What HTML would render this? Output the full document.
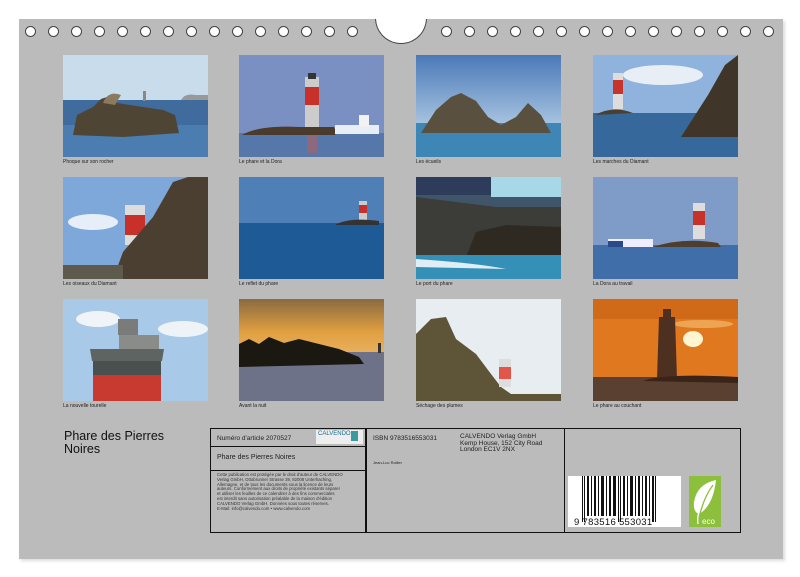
<!DOCTYPE html>
<html><head><meta charset="utf-8"><style>
*{margin:0;padding:0;box-sizing:border-box}
body{width:800px;height:577px;background:#fff;position:relative;overflow:hidden;font-family:"Liberation Sans",sans-serif}
.page{position:absolute;left:19px;top:19px;width:764px;height:540px;background:#bbbbbb;box-shadow:2px 2px 3px #ddd;overflow:hidden}
.hole{position:absolute;top:26px;width:11px;height:11px;border-radius:50%;background:#fff;border:1px solid #444}
.notch{position:absolute;left:356px;top:-1px;width:52px;height:26px;border-radius:0 0 26px 26px;background:#fff;border:1px solid #444;border-top:none}
.ph{position:absolute;width:145px;height:102px;overflow:hidden}
.ph svg{display:block}
.cap{position:absolute;font-size:5px;color:#222;white-space:nowrap}
.box{position:absolute;border:1.5px solid #111}
.t{position:absolute;color:#222;white-space:nowrap}
</style></head><body>
<div class="page">
<div class="notch"></div>
</div>
<div id="holes"></div>
<script>
var h='';var xs=[25,48,71,94,117,140,163,186,209,232,255,278,301,324,347,441,464,487,510,533,556,579,602,625,648,671,694,717,740,763];
xs.forEach(function(x){h+='<div class="hole" style="left:'+x+'px"></div>'});document.getElementById('holes').innerHTML=h;
</script>

<!-- Row 1 -->
<div class="ph" style="left:63px;top:55px"><svg width="145" height="102" viewBox="0 0 145 102" preserveAspectRatio="none">
<rect width="145" height="45" fill="#c9dcec"/><rect y="45" width="145" height="57" fill="#3f6c9c"/>
<rect y="70" width="145" height="32" fill="#4c7db0"/>
<path d="M10 80 L14 60 L30 52 L38 44 L50 40 L54 48 L80 52 L100 55 L112 60 L116 78 L60 82Z" fill="#4e4535"/>
<path d="M40 48 Q45 35 58 40 L52 50Z" fill="#8a7a60"/>
<rect x="80" y="36" width="3" height="10" fill="#888"/>
<path d="M118 45 Q122 38 132 40 L145 40 L145 45Z" fill="#999"/>
</svg></div>
<div class="cap" style="left:63px;top:159px">Phoque sur son rocher</div>

<div class="ph" style="left:239px;top:55px"><svg width="145" height="102" viewBox="0 0 145 102" preserveAspectRatio="none">
<rect width="145" height="80" fill="#7a90c2"/><rect y="78" width="145" height="24" fill="#5577aa"/>
<rect x="66" y="22" width="14" height="52" fill="#ccc"/><rect x="66" y="32" width="14" height="18" fill="#c8302a"/>
<rect x="69" y="18" width="8" height="6" fill="#333"/>
<path d="M3 80 Q20 70 60 72 L95 72 Q98 78 96 80Z" fill="#4a3b2c"/>
<rect x="96" y="70" width="44" height="9" fill="#e8eef5"/><rect x="120" y="60" width="10" height="12" fill="#f2f2f2"/>
<rect x="68" y="80" width="10" height="18" fill="#b36060" opacity=".6"/>
</svg></div>
<div class="cap" style="left:239px;top:159px">Le phare et la Dora</div>

<div class="ph" style="left:416px;top:55px"><svg width="145" height="102" viewBox="0 0 145 102" preserveAspectRatio="none">
<defs><linearGradient id="s3" x1="0" y1="0" x2="0" y2="1"><stop offset="0" stop-color="#4a79b8"/><stop offset="1" stop-color="#a8c4e0"/></linearGradient></defs>
<rect width="145" height="70" fill="url(#s3)"/><rect y="68" width="145" height="34" fill="#3e86b5"/>
<path d="M5 78 L20 55 L35 42 L45 38 L60 46 L72 62 L85 70 L100 62 L112 48 L125 60 L135 78Z" fill="#5a5040"/>
</svg></div>
<div class="cap" style="left:416px;top:159px">Les écueils</div>

<div class="ph" style="left:593px;top:55px"><svg width="145" height="102" viewBox="0 0 145 102" preserveAspectRatio="none">
<rect width="145" height="60" fill="#8fb3dc"/><ellipse cx="70" cy="20" rx="40" ry="10" fill="#e8eef5"/>
<rect y="58" width="145" height="44" fill="#36689c"/>
<rect x="20" y="18" width="10" height="36" fill="#ddd"/><rect x="20" y="25" width="10" height="14" fill="#c6342c"/>
<path d="M2 60 Q20 50 40 58Z" fill="#4a4030"/>
<path d="M88 82 L115 40 L132 10 L145 0 L145 82Z" fill="#3f3629"/>
</svg></div>
<div class="cap" style="left:593px;top:159px">Les marches du Diamant</div>

<!-- Row 2 -->
<div class="ph" style="left:63px;top:177px"><svg width="145" height="102" viewBox="0 0 145 102" preserveAspectRatio="none">
<rect width="145" height="102" fill="#7fa8da"/><ellipse cx="30" cy="45" rx="25" ry="8" fill="#e6eef7"/>
<rect x="62" y="28" width="20" height="40" fill="#ddd"/><rect x="62" y="38" width="20" height="20" fill="#c8302a"/>
<path d="M50 102 L60 75 L90 40 L110 5 L125 0 L145 0 L145 102Z" fill="#4a3f30"/>
<rect y="88" width="60" height="14" fill="#5e5a4e"/>
</svg></div>
<div class="cap" style="left:63px;top:281px">Les oiseaux du Diamant</div>

<div class="ph" style="left:239px;top:177px"><svg width="145" height="102" viewBox="0 0 145 102" preserveAspectRatio="none">
<rect width="145" height="48" fill="#4e7fb6"/><rect y="46" width="145" height="56" fill="#1e5a96"/>
<rect x="120" y="24" width="8" height="20" fill="#ccc"/><rect x="120" y="28" width="8" height="8" fill="#c8302a"/>
<path d="M96 48 Q110 40 140 44 L140 48Z" fill="#333"/>
</svg></div>
<div class="cap" style="left:239px;top:281px">Le reflet du phare</div>

<div class="ph" style="left:416px;top:177px"><svg width="145" height="102" viewBox="0 0 145 102" preserveAspectRatio="none">
<rect width="145" height="102" fill="#40546a"/><rect x="75" y="0" width="70" height="20" fill="#a7d8e8"/>
<rect width="75" height="18" fill="#2e3c5c"/>
<path d="M0 20 L80 30 L145 30 L145 80 L0 80Z" fill="#3c3c38"/>
<path d="M50 80 L60 55 L90 48 L145 50 L145 82Z" fill="#2e2a22"/>
<rect y="78" width="145" height="24" fill="#3590b8"/><path d="M0 82 Q60 86 90 92 L0 90Z" fill="#dfeef5"/>
</svg></div>
<div class="cap" style="left:416px;top:281px">Le port du phare</div>

<div class="ph" style="left:593px;top:177px"><svg width="145" height="102" viewBox="0 0 145 102" preserveAspectRatio="none">
<rect width="145" height="70" fill="#7f9cc8"/><rect y="68" width="145" height="34" fill="#3f6ea8"/>
<rect x="100" y="26" width="12" height="36" fill="#ddd"/><rect x="100" y="34" width="12" height="14" fill="#c8302a"/>
<path d="M60 70 Q90 60 125 66 L128 70Z" fill="#4e3e30"/>
<rect x="15" y="62" width="45" height="8" fill="#eef"/><rect x="15" y="64" width="15" height="6" fill="#2a4a88"/>
</svg></div>
<div class="cap" style="left:593px;top:281px">La Dora au travail</div>

<!-- Row 3 -->
<div class="ph" style="left:63px;top:299px"><svg width="145" height="102" viewBox="0 0 145 102" preserveAspectRatio="none">
<rect width="145" height="102" fill="#a9c9e8"/><ellipse cx="35" cy="20" rx="22" ry="8" fill="#f0f4f8"/><ellipse cx="120" cy="30" rx="25" ry="8" fill="#eef3f8"/>
<rect x="55" y="20" width="20" height="16" fill="#7a7c7c"/><rect x="56" y="36" width="40" height="14" fill="#8a8c8a"/>
<path d="M27 50 L101 50 L99 62 L29 62Z" fill="#5e6462"/>
<rect x="30" y="62" width="68" height="14" fill="#4a504e"/><rect x="30" y="76" width="68" height="26" fill="#c83a30"/>
</svg></div>
<div class="cap" style="left:63px;top:403px">La nouvelle tourelle</div>

<div class="ph" style="left:239px;top:299px"><svg width="145" height="102" viewBox="0 0 145 102" preserveAspectRatio="none">
<defs><linearGradient id="s8" x1="0" y1="0" x2="0" y2="1"><stop offset="0" stop-color="#8a6a40"/><stop offset=".6" stop-color="#e0a040"/><stop offset="1" stop-color="#e8b060"/></linearGradient></defs>
<rect width="145" height="55" fill="url(#s8)"/><rect y="53" width="145" height="49" fill="#6e7288"/>
<path d="M0 45 L10 40 L20 45 L30 38 L45 44 L60 40 L80 45 L100 50 L120 58 L125 65 L0 68Z" fill="#1a1810"/>
<rect x="139" y="44" width="3" height="10" fill="#333"/>
</svg></div>
<div class="cap" style="left:239px;top:403px">Avant la nuit</div>

<div class="ph" style="left:416px;top:299px"><svg width="145" height="102" viewBox="0 0 145 102" preserveAspectRatio="none">
<rect width="145" height="102" fill="#e8edf2"/>
<path d="M0 102 L0 35 L15 20 L30 18 L40 40 L60 55 L75 75 L85 88 L95 95 L145 95 L145 102Z" fill="#5e5538"/>
<rect x="83" y="60" width="12" height="28" fill="#ddd"/><rect x="83" y="68" width="12" height="12" fill="#e2564a"/>
</svg></div>
<div class="cap" style="left:416px;top:403px">Séchage des plumes</div>

<div class="ph" style="left:593px;top:299px"><svg width="145" height="102" viewBox="0 0 145 102" preserveAspectRatio="none">
<rect width="145" height="80" fill="#e07820"/><rect y="0" width="145" height="20" fill="#d06a18"/>
<ellipse cx="100" cy="40" rx="10" ry="8" fill="#fff5d0"/><ellipse cx="110" cy="25" rx="30" ry="4" fill="#f0b060" opacity=".8"/>
<rect y="78" width="145" height="24" fill="#5a4030"/>
<path d="M66 18 L82 18 L84 80 L64 80Z" fill="#4e3020"/><rect x="70" y="10" width="8" height="8" fill="#4e3020"/>
<path d="M50 82 Q70 74 145 78 L145 84Z" fill="#3a2418"/>
</svg></div>
<div class="cap" style="left:593px;top:403px">Le phare au couchant</div>

<!-- Title -->
<div class="t" style="left:64px;top:430px;font-size:12.5px;line-height:13px;color:#111">Phare des Pierres<br>Noires</div>

<!-- Info box -->
<div class="box" style="left:210px;top:428px;width:531px;height:105px"></div>
<div class="box" style="left:210px;top:428px;width:157px;height:105px"></div>
<div class="box" style="left:365px;top:428px;width:200px;height:105px"></div>
<div class="box" style="left:210px;top:446px;width:157px;height:25px"></div>
<div class="t" style="left:217px;top:435px;font-size:6.5px">Numéro d'article 2070527</div>
<div style="position:absolute;left:316px;top:430px;width:47px;height:14px;background:#eee"></div>
<div class="t" style="left:318px;top:431px;font-size:6px;color:#1a6a8a">CALVENDO</div>
<div style="position:absolute;left:351px;top:431px;width:7px;height:10px;background:#3a9aa0"></div>
<div class="t" style="left:217px;top:454px;font-size:7px">Phare des Pierres Noires</div>
<div class="t" style="left:217px;top:473px;font-size:4.3px;line-height:4.8px;color:#333">Cette publication est protégée par le droit d'auteur de CALVENDO<br>Verlag GmbH, Ottobrunner Strasse 39, 82008 Unterhaching,<br>Allemagne, et de tous les documents sous la licence de leurs<br>auteurs. Conformément aux droits de propriété existants séparer<br>et utiliser les feuilles de ce calendrier à des fins commerciales<br>est interdit sans autorisation préalable de la maison d'édition<br>CALVENDO Verlag GmbH. Données sous toutes réserves.<br>E-Mail: info@calvendo.com • www.calvendo.com</div>
<div class="t" style="left:373px;top:435px;font-size:6.5px">ISBN 9783516553031</div>
<div class="t" style="left:373px;top:460px;font-size:4px">Jean-Luc Rollier</div>
<div class="t" style="left:460px;top:434px;font-size:6.5px;line-height:6.5px">CALVENDO Verlag GmbH<br>Kemp House, 152 City Road<br>London EC1V 2NX</div>

<!-- barcode -->
<div style="position:absolute;left:568px;top:476px;width:113px;height:51px;background:#fff"></div>
<svg style="position:absolute;left:582px;top:476px" width="80" height="46" viewBox="0 0 80 46">
<g fill="#111">
<rect x="0" y="0" width="1" height="46"/><rect x="2" y="0" width="1" height="46"/><rect x="5" y="0" width="2" height="40"/><rect x="9" y="0" width="1" height="40"/><rect x="12" y="0" width="2" height="40"/><rect x="16" y="0" width="1" height="40"/><rect x="19" y="0" width="3" height="40"/><rect x="24" y="0" width="1" height="40"/><rect x="27" y="0" width="2" height="40"/><rect x="31" y="0" width="3" height="40"/><rect x="36" y="0" width="1" height="46"/><rect x="38" y="0" width="1" height="46"/><rect x="41" y="0" width="2" height="40"/><rect x="45" y="0" width="1" height="40"/><rect x="48" y="0" width="3" height="40"/><rect x="53" y="0" width="1" height="40"/><rect x="56" y="0" width="2" height="40"/><rect x="60" y="0" width="1" height="40"/><rect x="63" y="0" width="2" height="40"/><rect x="67" y="0" width="1" height="40"/><rect x="70" y="0" width="2" height="46"/><rect x="73" y="0" width="1" height="46"/>
</g></svg>
<div class="t" style="left:574px;top:517px;font-size:9.5px;color:#111;letter-spacing:0.3px">9 783516 553031</div>

<!-- eco -->
<div style="position:absolute;left:689px;top:476px;width:32px;height:51px;background:#8cc03c"></div>
<svg style="position:absolute;left:689px;top:476px" width="32" height="51" viewBox="0 0 32 51">
<path d="M27 4 Q8 8 5 26 Q4 36 10 38 Q24 30 27 4Z" fill="#fff"/>
<path d="M24 9 Q14 22 9 46" stroke="#8cc03c" stroke-width="1.3" fill="none"/>
<path d="M10 36 Q8 42 9 48" stroke="#fff" stroke-width="1.3" fill="none"/>
<text x="13" y="48" font-size="8" fill="#fff" font-family="Liberation Sans">eco</text>
</svg>
</body></html>
